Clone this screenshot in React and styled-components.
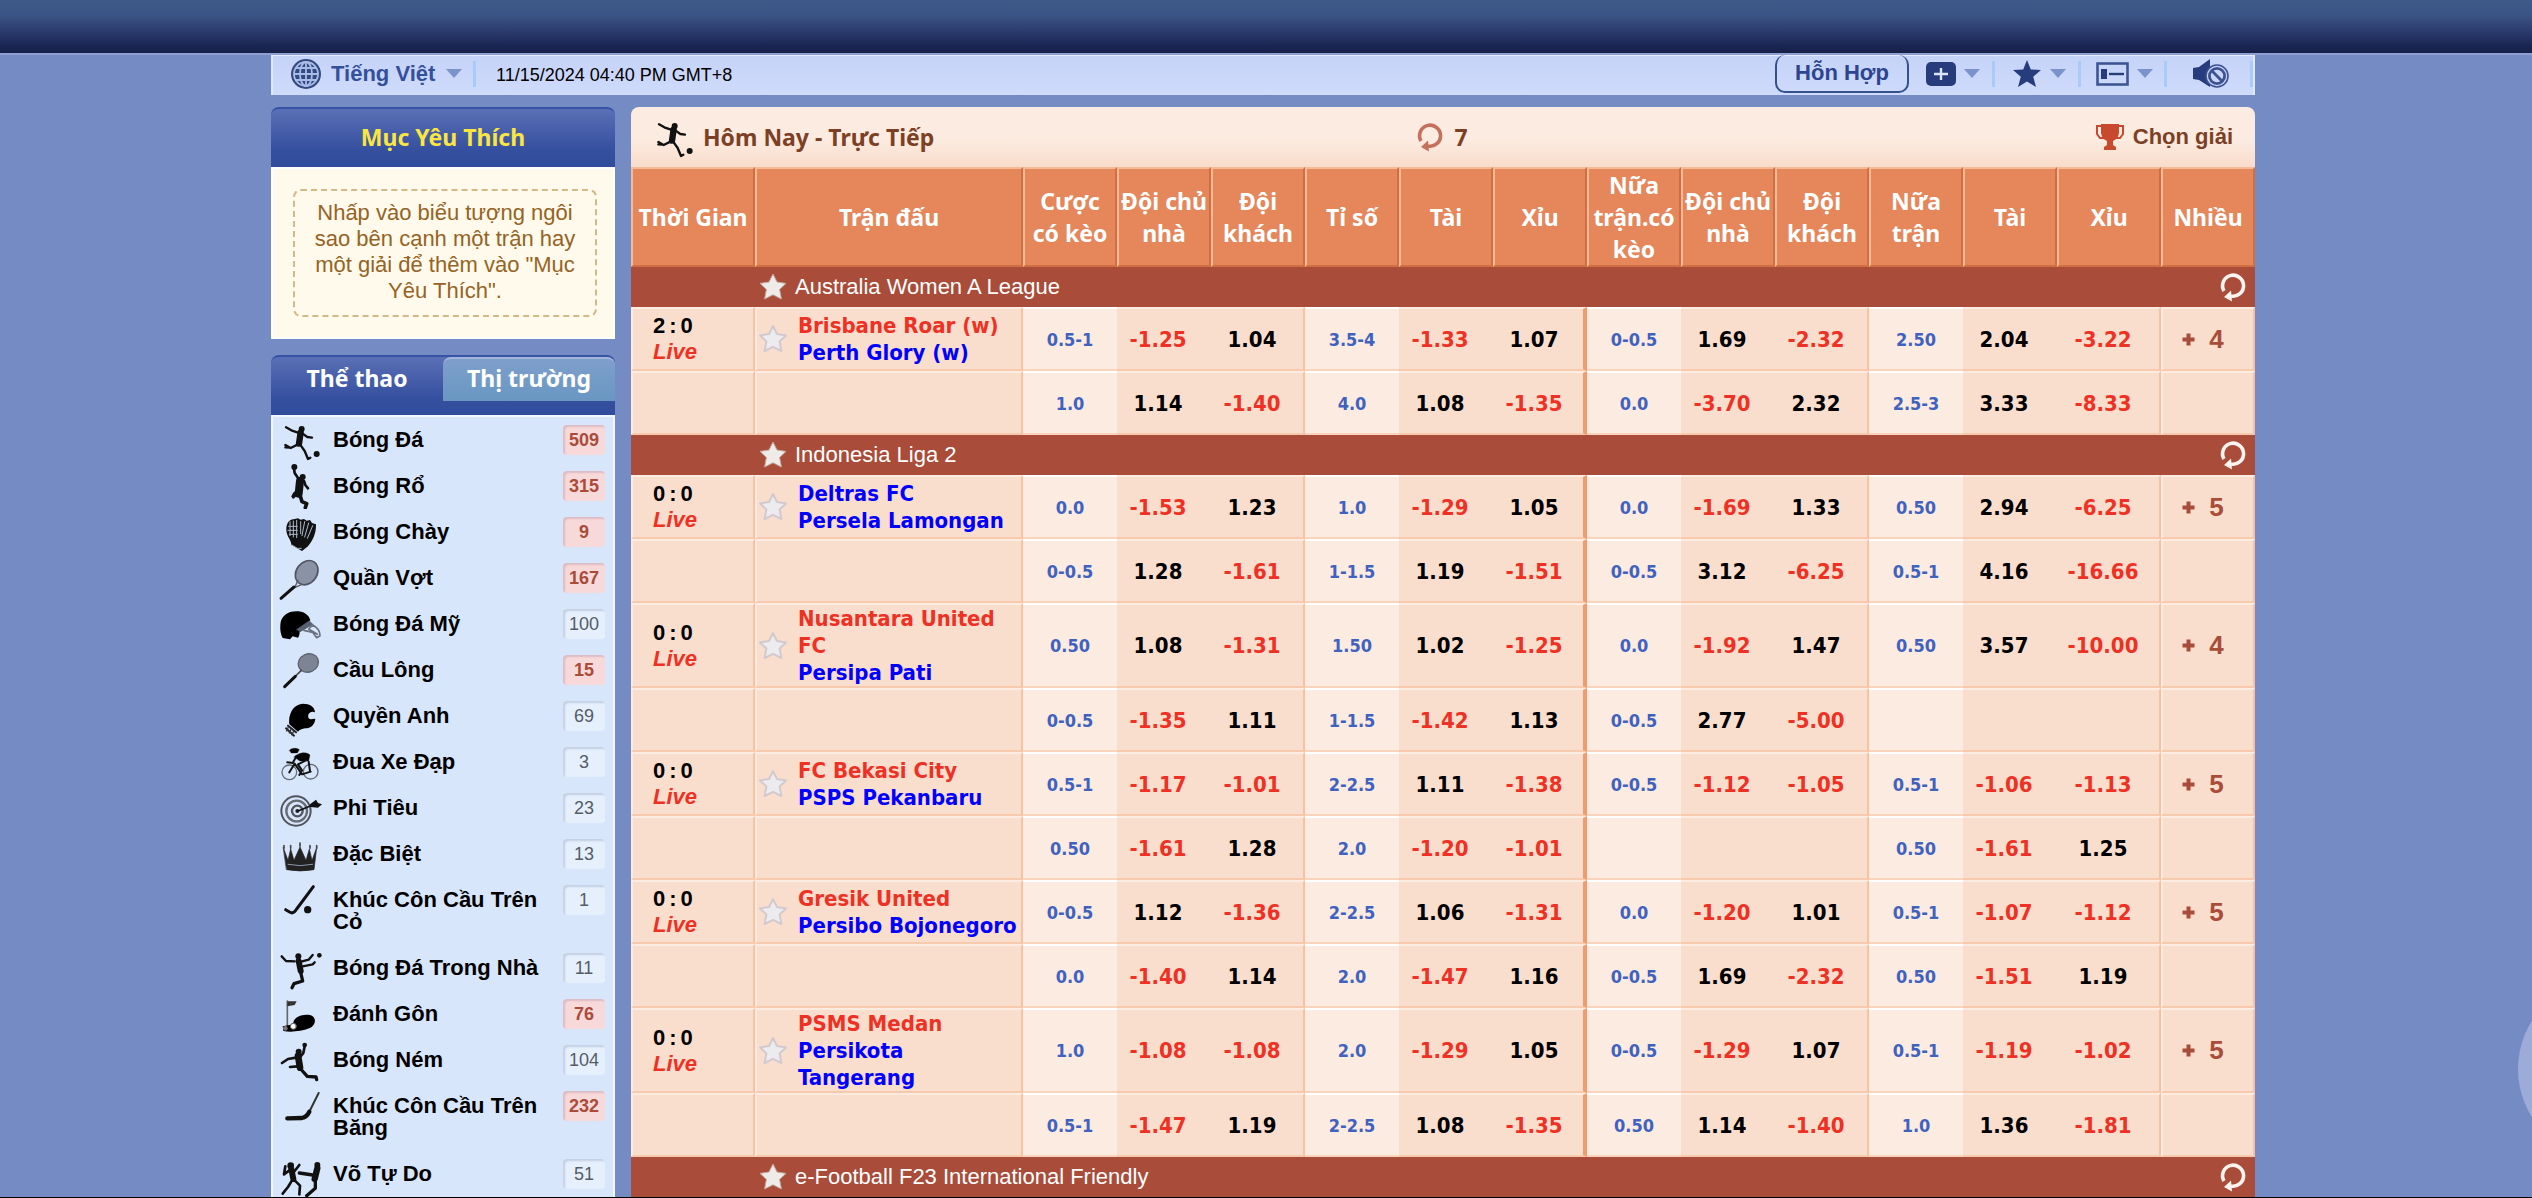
import React, { useState } from "react"
import styled, { createGlobalStyle, css } from "styled-components"

const arial = `"Liberation Sans", Arial, sans-serif`
const tahoma = `"DejaVu Sans Condensed", Tahoma, sans-serif`
const trebuchet = `"Noto Sans", "Trebuchet MS", sans-serif`

const sports = [
  { name: "Bóng Đá", count: 509, live: true, icon: "soccer" },
  { name: "Bóng Rổ", count: 315, live: true, icon: "basketball" },
  { name: "Bóng Chày", count: 9, live: true, icon: "baseball" },
  { name: "Quần Vợt", count: 167, live: true, icon: "tennis" },
  { name: "Bóng Đá Mỹ", count: 100, icon: "football" },
  { name: "Cầu Lông", count: 15, live: true, icon: "badminton" },
  { name: "Quyền Anh", count: 69, icon: "boxing" },
  { name: "Đua Xe Đạp", count: 3, icon: "cycling" },
  { name: "Phi Tiêu", count: 23, icon: "darts" },
  { name: "Đặc Biệt", count: 13, icon: "crown" },
  { name: "Khúc Côn Cầu Trên Cỏ", count: 1, icon: "hockey" },
  { name: "Bóng Đá Trong Nhà", count: 11, icon: "futsal" },
  { name: "Đánh Gôn", count: 76, live: true, icon: "golf" },
  { name: "Bóng Ném", count: 104, icon: "handball" },
  { name: "Khúc Côn Cầu Trên Băng", count: 232, live: true, icon: "iceHockey" },
  { name: "Võ Tự Do", count: 51, icon: "mma" },
]

const columns = [
  "Thời Gian",
  "Trận đấu",
  "Cược có kèo",
  "Đội chủ nhà",
  "Đội khách",
  "Tỉ số",
  "Tài",
  "Xỉu",
  "Nữa trận.có kèo",
  "Đội chủ nhà",
  "Đội khách",
  "Nữa trận",
  "Tài",
  "Xỉu",
  "Nhiều",
]

const leagues = [
  {
    name: "Australia Women A League",
    matches: [
      {
        score: [2, 0],
        home: "Brisbane Roar (w)",
        away: "Perth Glory (w)",
        strong: "home",
        more: 4,
        lines: [
          ["0.5-1", "-1.25", "1.04", "3.5-4", "-1.33", "1.07", "0-0.5", "1.69", "-2.32", "2.50", "2.04", "-3.22"],
          ["1.0", "1.14", "-1.40", "4.0", "1.08", "-1.35", "0.0", "-3.70", "2.32", "2.5-3", "3.33", "-8.33"],
        ],
      },
    ],
  },
  {
    name: "Indonesia Liga 2",
    matches: [
      {
        score: [0, 0],
        home: "Deltras FC",
        away: "Persela Lamongan",
        more: 5,
        lines: [
          ["0.0", "-1.53", "1.23", "1.0", "-1.29", "1.05", "0.0", "-1.69", "1.33", "0.50", "2.94", "-6.25"],
          ["0-0.5", "1.28", "-1.61", "1-1.5", "1.19", "-1.51", "0-0.5", "3.12", "-6.25", "0.5-1", "4.16", "-16.66"],
        ],
      },
      {
        score: [0, 0],
        home: "Nusantara United FC",
        away: "Persipa Pati",
        strong: "home",
        more: 4,
        lines: [
          ["0.50", "1.08", "-1.31", "1.50", "1.02", "-1.25", "0.0", "-1.92", "1.47", "0.50", "3.57", "-10.00"],
          ["0-0.5", "-1.35", "1.11", "1-1.5", "-1.42", "1.13", "0-0.5", "2.77", "-5.00", "", "", ""],
        ],
      },
      {
        score: [0, 0],
        home: "FC Bekasi City",
        away: "PSPS Pekanbaru",
        strong: "home",
        more: 5,
        lines: [
          ["0.5-1", "-1.17", "-1.01", "2-2.5", "1.11", "-1.38", "0-0.5", "-1.12", "-1.05", "0.5-1", "-1.06", "-1.13"],
          ["0.50", "-1.61", "1.28", "2.0", "-1.20", "-1.01", "", "", "", "0.50", "-1.61", "1.25"],
        ],
      },
      {
        score: [0, 0],
        home: "Gresik United",
        away: "Persibo Bojonegoro",
        strong: "home",
        more: 5,
        lines: [
          ["0-0.5", "1.12", "-1.36", "2-2.5", "1.06", "-1.31", "0.0", "-1.20", "1.01", "0.5-1", "-1.07", "-1.12"],
          ["0.0", "-1.40", "1.14", "2.0", "-1.47", "1.16", "0-0.5", "1.69", "-2.32", "0.50", "-1.51", "1.19"],
        ],
      },
      {
        score: [0, 0],
        home: "PSMS Medan",
        away: "Persikota Tangerang",
        strong: "home",
        more: 5,
        lines: [
          ["1.0", "-1.08", "-1.08", "2.0", "-1.29", "1.05", "0-0.5", "-1.29", "1.07", "0.5-1", "-1.19", "-1.02"],
          ["0.5-1", "-1.47", "1.19", "2-2.5", "1.08", "-1.35", "0.50", "1.14", "-1.40", "1.0", "1.36", "-1.81"],
        ],
      },
    ],
  },
  { name: "e-Football F23 International Friendly", matches: [] },
]

// drawings on a 132 x 138 grid, stroke based unless a fill is given
const drawings = {
  soccer: (
    <>
      <circle cx="71" cy="36" r="9" fill="#111" stroke="none" />
      <path d="M68 46L63 80" strokeWidth="19" />
      <path d="M24 31L40 40L60 47M74 50L88 60L102 62M60 82L38 93L22 84M34 92L22 91M66 82L80 102L90 126L97 122" strokeWidth="7" />
      <circle cx="116" cy="111" r="9" fill="#111" stroke="none" />
    </>
  ),
  basketball: (
    <>
      <circle cx="49" cy="12" r="9" fill="#111" stroke="none" />
      <path d="M48 16L50 30L62 48M78 54L82 66L90 76M60 90L46 103M50 90L44 100" strokeWidth="8" />
      <circle cx="74" cy="42" r="9" fill="#111" stroke="none" />
      <path d="M66 54L62 92" strokeWidth="24" />
      <path d="M66 96L72 116L86 122L82 134" strokeWidth="11" />
    </>
  ),
  baseball: (
    <>
      <path
        d="M25 64C24 46 32 31 46 31L60 28L68 32L78 30L86 35L96 33L102 42L114 46C115 76 102 98 90 112L72 126L40 108C40 92 26 84 25 64Z"
        fill="#111"
        stroke="none"
      />
      <path d="M32 52H58M30 64H58M34 76H58M36 38V80M46 36V84M56 34V86M68 38V74M80 38L72 80M92 42L80 84M104 50L88 88M42 108L58 118L70 118" stroke="#aeb9cb" strokeWidth="3" />
    </>
  ),
  tennis: (
    <>
      <ellipse cx="86" cy="53" rx="31" ry="39" transform="rotate(36 86 53)" fill="#8993a5" stroke="#4f5562" strokeWidth="5" />
      <path d="M60 76L50 98L72 88" stroke="#555b66" strokeWidth="4" />
      <path d="M48 96L9 130" strokeWidth="9" />
    </>
  ),
  football: (
    <>
      <path d="M7 72C8 42 34 28 62 31C82 33 94 45 97 58L70 80C62 90 68 100 60 110L44 106L36 115L14 111C8 100 6 88 7 72Z" fill="#000" stroke="none" />
      <path d="M56 86L94 60L104 70L66 92" fill="#56606f" stroke="#56606f" strokeWidth="3" />
      <path d="M78 88L104 94L116 110L126 104C126 90 116 78 104 72L92 84L118 100" stroke="#68717f" strokeWidth="5" />
    </>
  ),
  badminton: (
    <>
      <ellipse cx="91" cy="48" rx="31" ry="27" transform="rotate(-25 91 48)" fill="#7d8594" stroke="#5d6470" strokeWidth="4" />
      <path d="M70 70L50 90" stroke="#444" strokeWidth="5" />
      <path d="M52 88L20 119" strokeWidth="9" />
    </>
  ),
  boxing: (
    <>
      <path d="M34 94C30 66 44 34 74 32C96 32 110 42 111 58C98 52 86 64 92 76C98 82 106 76 112 78C110 96 98 106 82 106C72 108 64 110 60 116L34 94Z" fill="#000" stroke="none" />
      <path d="M30 98L54 118M24 106L48 128" stroke="#222" strokeWidth="6" />
      <path d="M30 104L26 114M38 110L34 120M46 116L42 126" stroke="#333" strokeWidth="4" />
    </>
  ),
  cycling: (
    <>
      <circle cx="34" cy="100" r="22" stroke="#666c76" strokeWidth="4" />
      <circle cx="98" cy="98" r="22" stroke="#666c76" strokeWidth="4" />
      <path d="M34 34C40 26 56 26 64 32L58 42H40Z" fill="#000" />
      <path d="M48 54C62 40 84 36 96 48L92 66L66 66Z" fill="#000" />
      <path d="M52 58L44 72L28 70M84 64L60 76L72 94L64 108M92 68L96 96M34 100L50 74L72 106L98 98" strokeWidth="6" />
    </>
  ),
  darts: (
    <>
      <circle cx="54" cy="78" r="44" stroke="#50545c" strokeWidth="6" />
      <circle cx="56" cy="78" r="31" stroke="#666b74" strokeWidth="7" />
      <circle cx="58" cy="78" r="16" stroke="#50545c" strokeWidth="7" />
      <circle cx="58" cy="78" r="6" fill="#222" stroke="none" />
      <path d="M60 78L104 60" strokeWidth="5" />
      <path d="M96 58L114 44L120 54L132 58L120 68L98 66Z" fill="#111" stroke="none" />
    </>
  ),
  crown: (
    <>
      <path d="M16 50L30 88L38 54L48 88L66 48L84 88L94 54L102 88L116 50L108 116Q66 124 26 116Z" fill="#222" stroke="#222" strokeWidth="2" />
      <path d="M30 100Q66 108 104 100" stroke="#8d97a8" strokeWidth="3" />
      <path d="M66 36V46M38 44V52M96 44V52M18 44V52M116 44V52" stroke="#444" strokeWidth="5" />
    </>
  ),
  hockey: (
    <>
      <path d="M106 29L56 96Q46 112 36 106L23 98" strokeWidth="9" />
      <circle cx="89" cy="98" r="11" fill="#111" stroke="none" />
    </>
  ),
  futsal: (
    <>
      <circle cx="61" cy="34" r="9" fill="#111" stroke="none" />
      <path d="M11 34L24 48L50 49M70 50L92 44L104 30M74 64L104 58L110 52" strokeWidth="7" />
      <path d="M62 48L68 78" strokeWidth="18" />
      <path d="M68 82L74 108L48 116L42 128" strokeWidth="10" />
      <circle cx="124" cy="31" r="7" fill="#111" stroke="none" />
    </>
  ),
  golf: (
    <>
      <path d="M28 30V106" stroke="#666" strokeWidth="5" />
      <path d="M28 31H56L50 42L28 46Z" fill="#333" stroke="none" />
      <path d="M46 100C44 78 74 68 96 72C118 78 114 104 94 112C70 122 36 124 16 120L14 106Z" fill="#000" stroke="none" />
      <circle cx="46" cy="106" r="9" fill="#fff" stroke="#555" strokeWidth="3" />
      <circle cx="22" cy="112" r="7" fill="#777" stroke="none" />
    </>
  ),
  handball: (
    <>
      <circle cx="80" cy="24" r="7" fill="#111" stroke="none" />
      <circle cx="62" cy="44" r="9" fill="#111" stroke="none" />
      <path d="M80 28L76 48L68 58M54 62L30 66L12 78M58 88L36 90" strokeWidth="8" />
      <path d="M60 56L66 92" strokeWidth="20" />
      <path d="M68 96L88 118L114 120L116 128" strokeWidth="10" />
    </>
  ),
  iceHockey: (
    <>
      <path d="M122 30L92 90" stroke="#333" strokeWidth="6" />
      <path d="M94 86Q86 102 72 105L28 106" strokeWidth="13" />
    </>
  ),
  mma: (
    <>
      <circle cx="38" cy="44" r="10" fill="#111" stroke="none" />
      <path d="M40 54L46 84" strokeWidth="18" />
      <path d="M34 58L18 70L22 46M50 60L64 42M42 88L30 108L14 128M50 88L66 104L64 130" strokeWidth="8" />
      <circle cx="118" cy="42" r="9" fill="#111" stroke="none" />
      <path d="M118 52L110 84" strokeWidth="19" />
      <path d="M104 72L64 66M112 90L112 112L86 134" strokeWidth="10" />
    </>
  ),
}

function SportIcon({ name }) {
  return (
    <SportSvg viewBox="0 0 132 138" aria-hidden="true">
      {drawings[name]}
    </SportSvg>
  )
}

function StarIcon({ solid }) {
  return (
    <svg width="30" height="30" viewBox="0 0 30 30" aria-hidden="true">
      <path
        d="M15 2L19 10L28 11.4L21.6 17.4L23.4 27L15 22.8L6.6 27L8.4 17.4L2 11.4L11 10Z"
        fill={solid ? "#eeebe9" : "#ececef"}
        stroke={solid ? "#c5a99e" : "#d2cace"}
        strokeWidth={solid ? 1 : 2}
        strokeLinejoin="round"
      />
    </svg>
  )
}

function RefreshIcon({ color }) {
  return (
    <svg width="28" height="30" viewBox="0 0 28 30" aria-hidden="true">
      <path d="M5 19A10.5 10.5 0 1 1 12 24" fill="none" stroke={color} strokeWidth="3.6" />
      <path d="M5 25L12 18.5L13 29.5Z" fill={color} />
    </svg>
  )
}

function Caret() {
  return (
    <svg width="16" height="9" viewBox="0 0 16 9" aria-hidden="true">
      <path d="M0 0H16L8 9Z" fill="#7b93cb" />
    </svg>
  )
}

function App() {
  const [tab, setTab] = useState("sports")

  return (
    <Page>
      <GlobalStyle />
      <TopBanner />
      <Wrapper>
        <Toolbar>
          <Language>
            <svg width="30" height="30" viewBox="0 0 30 30" fill="none" stroke="#a9bce8" strokeWidth="1.8" aria-hidden="true">
              <circle cx="15" cy="15" r="15" fill="#33497f" stroke="none" />
              <path d="M15 3V27M3 15H27M5 9H25M5 21H25" />
              <ellipse cx="15" cy="15" rx="6" ry="12" />
              <circle cx="15" cy="15" r="12" />
            </svg>
            <LanguageSelect aria-label="Ngôn ngữ">
              <option>Tiếng Việt</option>
            </LanguageSelect>
            <Caret />
          </Language>
          <Clock>11/15/2024 04:40 PM GMT+8</Clock>
          <Tools>
            <MixButton type="button">Hỗn Hợp</MixButton>
            <ToolButton type="button" aria-label="Thêm">
              <svg width="30" height="24" viewBox="0 0 30 24" aria-hidden="true">
                <rect width="30" height="24" rx="5" fill="#263c7c" />
                <path d="M15 6V18M8 12H22" stroke="#dbe4fb" strokeWidth="2.4" />
              </svg>
              <Caret />
            </ToolButton>
            <ToolButton type="button" aria-label="Yêu thích">
              <svg width="30" height="28" viewBox="0 0 30 28" aria-hidden="true">
                <path d="M15 0L18.8 9.4L29 10L21.2 16.8L24 27L15 21.4L6 27L8.8 16.8L1 10L11.2 9.4Z" fill="#263c7c" />
              </svg>
              <Caret />
            </ToolButton>
            <ToolButton type="button" aria-label="Hiển thị">
              <svg width="33" height="24" viewBox="0 0 33 24" aria-hidden="true">
                <rect x="1.5" y="1.5" width="30" height="21" fill="none" stroke="#3e5594" strokeWidth="2.6" />
                <rect x="5" y="7" width="6" height="10" fill="#263c7c" />
                <path d="M13 12H28" stroke="#263c7c" strokeWidth="2.4" />
              </svg>
              <Caret />
            </ToolButton>
            <ToolButton type="button" aria-label="Âm thanh">
              <svg width="36" height="30" viewBox="0 0 36 30" aria-hidden="true">
                <path d="M0 9L6 8L17 0V28L6 21L0 20Z" fill="#263c7c" />
                <circle cx="24" cy="17" r="11" fill="#c9d6f9" stroke="#3d5291" strokeWidth="1.6" />
                <circle cx="24" cy="17" r="7.6" fill="none" stroke="#3d5291" strokeWidth="2.8" />
                <path d="M18.6 11.6L29.4 22.4" stroke="#3d5291" strokeWidth="2.8" />
              </svg>
            </ToolButton>
          </Tools>
        </Toolbar>

        <Columns>
          <Sidebar>
            <section>
              <FavoriteTitle>Mục Yêu Thích</FavoriteTitle>
              <FavoriteBody>
                <FavoriteHint>
                  Nhấp vào biểu tượng ngôi sao bên cạnh một trận hay một giải để thêm vào "Mục Yêu Thích".
                </FavoriteHint>
              </FavoriteBody>
            </section>
            <section>
              <Tabs>
                <Tab type="button" $active={tab === "sports"} onClick={() => setTab("sports")}>
                  Thể thao
                </Tab>
                <Tab type="button" $active={tab === "market"} onClick={() => setTab("market")}>
                  Thị trường
                </Tab>
              </Tabs>
              <SportList>
                {sports.map(sport => (
                  <li key={sport.name}>
                    <SportLink href="#">
                      <SportIcon name={sport.icon} />
                      <SportName>{sport.name}</SportName>
                      <Count $live={sport.live}>{sport.count}</Count>
                    </SportLink>
                  </li>
                ))}
              </SportList>
            </section>
          </Sidebar>

          <Main>
            <TitleBar>
              <Title>
                <SportIcon name="soccer" />
                Hôm Nay - Trực Tiếp
              </Title>
              <Reload type="button" aria-label="Làm mới, 7">
                <RefreshIcon color="#c4705c" />7
              </Reload>
              <ChooseLeague href="#">
                <svg width="28" height="26" viewBox="0 0 28 26" aria-hidden="true">
                  <path d="M5 0H23V9Q22 15 17 17V21L20 23V26H8V23L11 21V17Q6 15 5 9Z" fill="#c9492f" />
                  <path d="M6 2H1V10L4 14H8M22 2H27V10L24 14H20" fill="none" stroke="#c9492f" strokeWidth="2" />
                </svg>
                Chọn giải
              </ChooseLeague>
            </TitleBar>

            <OddsTable>
              <colgroup>
                <TimeCol />
                <col />
                {columns.slice(2, 13).map((_, i) => (
                  <OddsCol key={i} />
                ))}
                <LastOddsCol />
                <OddsCol />
              </colgroup>
              <thead>
                <tr>
                  {columns.map((name, i) => (
                    <HeadCell key={i} scope="col">
                      {name}
                    </HeadCell>
                  ))}
                </tr>
              </thead>
              <tbody>
                {leagues.map(league => (
                  <React.Fragment key={league.name}>
                    <LeagueRow>
                      <td />
                      <td colSpan={14}>
                        <LeagueLine>
                          <IconButton type="button" aria-label="Thêm giải">
                            <StarIcon solid />
                          </IconButton>
                          <LeagueName>{league.name}</LeagueName>
                          <IconButton type="button" aria-label="Làm mới giải">
                            <RefreshIcon color="#fdf3ee" />
                          </IconButton>
                        </LeagueLine>
                      </td>
                    </LeagueRow>
                    {league.matches.map(match =>
                      match.lines.map((line, n) => <OddsRow key={match.home + n} match={match} line={line} first={n === 0} />)
                    )}
                  </React.Fragment>
                ))}
              </tbody>
            </OddsTable>
          </Main>
        </Columns>
      </Wrapper>
      <FloatingBubble />
    </Page>
  )
}

function OddsRow({ match, line, first }) {
  return (
    <tr>
      <TimeCell>
        {first && (
          <>
            <Score>
              <span>{match.score[0]}</span>
              <span>:</span>
              <span>{match.score[1]}</span>
            </Score>
            <Live>Live</Live>
          </>
        )}
      </TimeCell>
      <TeamCell>
        {first && (
          <TeamLine>
            <IconButton type="button" aria-label="Thêm trận">
              <StarIcon />
            </IconButton>
            <div>
              <Team $strong={match.strong === "home"}>{match.home}</Team>
              <Team>{match.away}</Team>
            </div>
          </TeamLine>
        )}
      </TeamCell>
      {line.map((value, i) =>
        i % 3 === 0 ? (
          <HandicapCell key={i}>{value}</HandicapCell>
        ) : (
          <OddsCell key={i} $negative={value.startsWith("-")} $edge={i % 3 === 2} $half={i === 5}>
            {value}
          </OddsCell>
        )
      )}
      <MoreCell>
        {first && (
          <MoreLink href="#">
            <svg width="13" height="13" viewBox="0 0 13 13" aria-hidden="true">
              <path d="M6.5 0.5V12.5M0.5 6.5H12.5" stroke="#a94c39" strokeWidth="4" />
            </svg>
            {match.more}
          </MoreLink>
        )}
      </MoreCell>
    </tr>
  )
}

export default App

const GlobalStyle = createGlobalStyle`
  * {
    box-sizing: border-box;
  }
  body {
    margin: 0;
    background: #758bc3;
    font-family: ${arial};
    font-size: 22px;
  }
  button, select {
    font: inherit;
    color: inherit;
    border: 0;
    padding: 0;
    background: none;
    cursor: pointer;
  }
  a {
    color: inherit;
    text-decoration: none;
  }
  svg {
    flex: none;
    display: block;
  }
`

const Page = styled.div`
  position: relative;
  height: 100vh;
  overflow: hidden;
  border-bottom: 1px solid #000;
`

const TopBanner = styled.header`
  height: 55px;
  background: linear-gradient(#3e5a89, #3b5384 30%, #1b2656 85%, #172049);
  border-bottom: 2px solid #8f9fd2;
`

const Wrapper = styled.div`
  max-width: 1990px;
  margin: 0 auto;
  padding-right: 6px;
`

const Toolbar = styled.div`
  display: flex;
  align-items: center;
  height: 40px;
  padding-bottom: 4px;
  border-top: 1px solid #e4ebfd;
  border-left: 2px solid #dfe8fd;
  border-right: 2px solid #dfe8fd;
  background: linear-gradient(#c5d3f8, #cfdbfb);
`

const divider = css`
  border-right: 3px solid #a9cbf8;
`

const Language = styled.label`
  display: flex;
  align-items: center;
  height: 26px;
  padding: 0 11px 0 18px;
  color: #33509c;
  ${divider}
`

const LanguageSelect = styled.select`
  appearance: none;
  margin: 0 10px;
  font-weight: bold;
  outline: none;
`

const Clock = styled.time`
  margin-left: 20px;
  padding-top: 4px;
  font-size: 18px;
  color: #000;
`

const Tools = styled.div`
  display: flex;
  align-items: center;
  margin-left: auto;
`

const MixButton = styled.button`
  height: 38px;
  width: 134px;
  border: 2px solid #33508f;
  border-top: 0;
  border-radius: 10px;
  font-weight: bold;
  color: #2d4590;
`

const ToolButton = styled.button`
  display: flex;
  align-items: center;
  justify-content: center;
  gap: 8px;
  width: 86px;
  height: 26px;
  padding-left: 4px;
  ${divider}
`

const Columns = styled.div`
  display: flex;
  align-items: flex-start;
  gap: 16px;
  padding-top: 12px;
`

const Sidebar = styled.aside`
  display: flex;
  flex-direction: column;
  gap: 16px;
  width: 344px;
  flex: none;
`

const bluePanel = css`
  border-top: 2px solid #3653a6;
  border-radius: 8px 8px 0 0;
  background: linear-gradient(#5a70b6, #3650a0 70%, #314c9b);
`

const FavoriteTitle = styled.h2`
  display: flex;
  align-items: center;
  justify-content: center;
  height: 60px;
  margin: 0;
  padding-bottom: 2px;
  font: bold 23px ${trebuchet};
  color: #fbe63f;
  ${bluePanel}
`

const FavoriteBody = styled.div`
  padding: 20px 16px 20px 20px;
  border: 2px solid #fff;
  background: #fffaeb;
`

const FavoriteHint = styled.p`
  margin: 0;
  padding: 9px 16px 11px;
  border: 2px dashed #d3b987;
  border-radius: 8px;
  line-height: 26px;
  text-align: center;
  color: #966325;
`

const Tabs = styled.div`
  display: flex;
  align-items: flex-start;
  height: 60px;
  ${bluePanel}
`

const Tab = styled.button`
  flex: 1;
  height: 44px;
  font: bold 23px ${trebuchet};
  color: #fff;
  border-radius: 8px 8px 0 0;
  background: ${props => (props.$active ? "none" : "linear-gradient(#7f9fcb, #6897c2)")};
  border-top: 2px solid ${props => (props.$active ? "transparent" : "#a3b4dd")};
  padding-bottom: 4px;
`

const SportList = styled.ul`
  margin: 0;
  padding: 0;
  list-style: none;
  border: 2px solid #f2f6fe;
  border-bottom: 0;
  background: #d8e6fc;
`

const SportSvg = styled.svg`
  width: 44px;
  height: 46px;
  fill: none;
  stroke: #111;
  stroke-linecap: round;
  stroke-linejoin: round;
`

const SportLink = styled.a`
  display: flex;
  align-items: flex-start;
  padding: 0 8px 0 5px;
`

const SportName = styled.span`
  flex: 1;
  padding: 12px 8px 12px 11px;
  line-height: 22px;
  font-weight: bold;
  color: #000;
`

const Count = styled.span`
  flex: none;
  width: 42px;
  height: 30px;
  margin-top: 8px;
  border-radius: 4px;
  font-size: 18px;
  line-height: 30px;
  text-align: center;
  font-weight: ${props => (props.$live ? "bold" : "normal")};
  color: ${props => (props.$live ? "#a94c39" : "#555c66")};
  background: ${props => (props.$live ? "#f8d9da" : "#e6f0fd")};
  box-shadow: inset 2px 2px 2px ${props => (props.$live ? "#dcbcc4" : "#c3cfe3")};
`

const Main = styled.main`
  flex: 1;
  min-width: 0;
`

const TitleBar = styled.div`
  display: grid;
  grid-template-columns: 1fr auto 1fr;
  align-items: center;
  height: 60px;
  padding: 0 22px 0 20px;
  border-radius: 8px 8px 0 0;
  background: linear-gradient(#fcebe0 55%, #f9dccb);
  color: #7c4025;
  font: bold 23px ${trebuchet};
`

const Title = styled.h1`
  display: flex;
  align-items: center;
  gap: 8px;
  margin: 0;
  font: inherit;
`

const Reload = styled.button`
  display: flex;
  align-items: center;
  gap: 10px;
`

const ChooseLeague = styled.a`
  display: flex;
  align-items: center;
  justify-self: end;
  gap: 9px;
  font: bold 22px ${arial};
`

const OddsTable = styled.table`
  width: 100%;
  table-layout: fixed;
  border-collapse: separate;
  border-spacing: 0;

  td,
  th {
    padding: 0;
  }
`

const TimeCol = styled.col`
  width: 124px;
`

const OddsCol = styled.col`
  width: 94px;
`

const LastOddsCol = styled.col`
  width: 104px;
`

const HeadCell = styled.th`
  height: 100px;
  border: 2px solid;
  border-color: #f4bb96 #d16e43 #d16e43 #f4bb96;
  background: #e5865b;
  color: #fff;
  font: bold 23px/32px ${trebuchet};
`

const LeagueRow = styled.tr`
  height: 40px;
  background: #a94c39;
  color: #fff;
`

const LeagueLine = styled.div`
  display: flex;
  align-items: center;
  padding: 0 8px 0 3px;
`

const LeagueName = styled.span`
  flex: 1;
  padding-left: 7px;
`

const IconButton = styled.button`
  flex: none;
`

const cell = css`
  height: 64px;
  border-top: 2px solid #fcebe0;
  border-bottom: 2px solid #f7c9ad;
  background: #fadecd;
`

const TimeCell = styled.td`
  ${cell}
  border-left: 2px solid #fcebe0;
  border-right: 2px solid #f6c2a1;
  font-weight: bold;
  line-height: 26px;
  color: #000;

  && {
    padding-left: 20px;
  }
`

const Score = styled.div`
  display: flex;
  gap: 4px;
`

const Live = styled.div`
  font-style: italic;
  color: #ee3124;
`

const TeamCell = styled.td`
  ${cell}
  border-left: 2px solid #fcebe0;
  border-right: 2px solid #f6c2a1;
`

const TeamLine = styled.div`
  display: flex;
  align-items: center;
  gap: 10px;
  padding-left: 1px;
`

const Team = styled.div`
  font: bold 22px/27px ${tahoma};
  color: ${props => (props.$strong ? "#ee3124" : "#0000ff")};
`

const HandicapCell = styled.td`
  ${cell}
  background: #fcebe0;
  border-top-color: #fff;
  border-bottom-color: #f9d3bc;
  text-align: center;
  font: bold 18px ${tahoma};
  color: #3f62c0;
`

const OddsCell = styled.td`
  ${cell}
  text-align: center;
  font: bold 22px ${tahoma};
  color: ${props => (props.$negative ? "#ee3124" : "#000")};
  border-right: ${props => (props.$half ? "4px solid #f09c6c" : props.$edge ? "2px solid #f6c2a1" : "0")};

  && {
    padding-right: ${props => (props.$half ? "8px" : props.$edge ? "10px" : "12px")};
  }
`

const MoreCell = styled.td`
  ${cell}
  border-left: 2px solid #fcebe0;
  border-right: 2px solid #f6c2a1;
`

const MoreLink = styled.a`
  display: flex;
  align-items: center;
  justify-content: center;
  gap: 14px;
  padding-right: 10px;
  font-size: 26px;
  font-weight: bold;
  color: #a94c39;
`

const FloatingBubble = styled.div`
  position: absolute;
  right: -166px;
  bottom: 38px;
  width: 180px;
  height: 180px;
  border-radius: 50%;
  background: #9dabd9;
`
